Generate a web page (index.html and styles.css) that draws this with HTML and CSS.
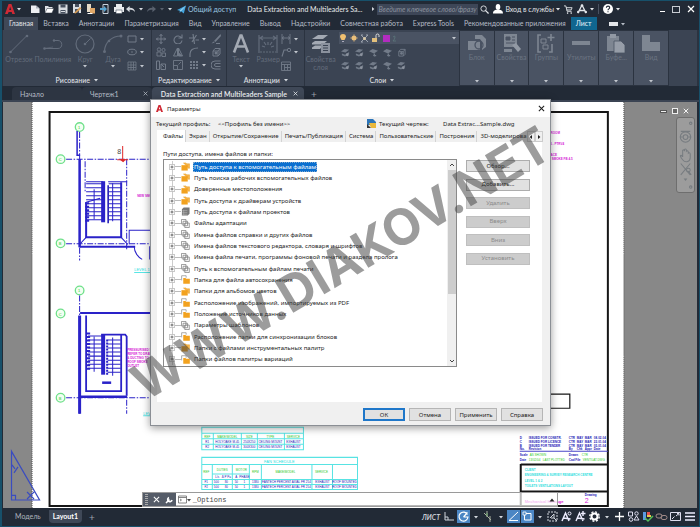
FILE: index.html
```html
<!DOCTYPE html>
<html lang="ru">
<head>
<meta charset="utf-8">
<title>Data Extraction and Multileaders Sample</title>
<link rel="stylesheet" href="styles.css">
</head>
<body>
<svg class="defs" aria-hidden="true">
  <symbol id="i-caret" viewBox="0 0 4 4"><path d="M0 1h4L2 3.4z" fill="currentColor"/></symbol>
  <symbol id="i-logo" viewBox="0 0 10 10"><path d="M0 10 3.6 0h2.8L10 10H7.3L6.7 8H3.6L2.8 10zM4.2 6h2L5.1 2.4z" fill="#cf2a35"/></symbol>
  <symbol id="i-x" viewBox="0 0 8 8"><path d="M1 1l6 6M7 1L1 7" stroke="currentColor" stroke-width="1.2" fill="none"/></symbol>
  <symbol id="i-new" viewBox="0 0 10 10"><path d="M1 1.5h5l3.5 3V9H1z" fill="#eceef1"/><path d="M6 1.5v3h3.5" fill="#aeb4bd"/></symbol>
  <symbol id="i-open" viewBox="0 0 10 10"><path d="M1 9V2h3l1 1h3.5v1.5" fill="#dfe2e6"/><path d="M1 9l2-4.5h7L8 9z" fill="#fff" stroke="#222a36" stroke-width=".5"/></symbol>
  <symbol id="i-save" viewBox="0 0 10 10"><path d="M.5.5h9v9h-9z" fill="#d8dce1"/><path d="M2.5.5h5v3h-5zM2.5 6h5v3.5h-5z" fill="#47505f"/><path d="M3 7.5h4" stroke="#d8dce1"/></symbol>
  <symbol id="i-saveas" viewBox="0 0 10 10"><path d="M1 0h8v9H1z" fill="#d8dce1"/><path d="M3 0h4v3H3zM3 5h4v4H3z" fill="#47505f"/><path d="M2 9l6-6 1.5 1.5-6 5z" fill="#d59a52"/></symbol>
  <symbol id="i-web" viewBox="0 0 10 10"><path d="M1 0h4v8H1z" fill="#e5d9c5"/><path d="M4 4h5v5.5H4z" fill="#e0a868"/><path d="M1.5 9.5h5" stroke="#fff"/></symbol>
  <symbol id="i-cloud" viewBox="0 0 10 10"><path d="M3 .5h5v9H3z" fill="none" stroke="#c9d2dc"/><path d="M0 4h4V2l3 3-3 3V6H0z" fill="#58a5d2"/></symbol>
  <symbol id="i-print" viewBox="0 0 10 10"><path d="M2 0h6v3H2zM0 3h10v5H0z" fill="#e9ebee"/><path d="M2 6h6v3.5H2z" fill="#fff" stroke="#47505f" stroke-width=".6"/></symbol>
  <symbol id="i-undo" viewBox="0 0 10 8"><path d="M4 0v2c4 0 6 2 6 5-1-2-3-3-6-2.600V7L0 3.500z" fill="currentColor"/></symbol>
  <symbol id="i-plane" viewBox="0 0 10 9"><path d="M0 5L10 0 7.500 9 4.500 6.500 3 8.500V6z" fill="#45a6df"/><path d="M3 6l7-6-5.500 6.500" fill="#a8d9f3"/></symbol>
  <symbol id="i-search" viewBox="0 0 10 10"><circle cx="4" cy="4" r="3" fill="none" stroke="currentColor"/><path d="M6 6l3.500 3.500" stroke="currentColor" stroke-width="1.400"/></symbol>
  <symbol id="i-user" viewBox="0 0 10 10"><ellipse cx="5" cy="3" rx="2.300" ry="2.900" fill="#fff"/><path d="M0 9.500c0-3 2-3.300 3.500-3.700h3C8 6.200 10 6.500 10 9.500z" fill="#fff"/></symbol>
  <symbol id="i-cart" viewBox="0 0 10 10"><path d="M0 1h2l1.500 6h5M2.300 3H9L8 5.500H3" fill="none" stroke="currentColor"/><circle cx="4" cy="9" r=".9" fill="currentColor"/><circle cx="8" cy="9" r=".9" fill="currentColor"/></symbol>
  <symbol id="i-app" viewBox="0 0 10 10"><path d="M5 1L1 9M5 1l4 8M2 6.500h6" fill="none" stroke="currentColor" stroke-width="1.300"/><circle cx="5" cy="1.500" r="1.300" fill="currentColor"/><circle cx="1.200" cy="8" r="1.200" fill="currentColor"/><circle cx="8.800" cy="8" r="1.200" fill="currentColor"/></symbol>
  <symbol id="i-help" viewBox="0 0 10 10"><circle cx="5" cy="5" r="5" fill="#fff"/><path d="M3.400 3.800C3.400 1.500 6.700 1.700 6.700 3.700 6.700 5 5 4.800 5 6.300M5 7.200v1" fill="none" stroke="#222a36" stroke-width="1.100"/></symbol>
  <symbol id="i-line" viewBox="0 0 20 20"><path d="M1 18.500L18 1.500" stroke="currentColor"/><circle cx="1.500" cy="18" r="1.300" fill="currentColor"/><circle cx="18" cy="2" r="1.300" fill="currentColor"/></symbol>
  <symbol id="i-poly" viewBox="0 0 20 20"><path d="M1 14.500h14c5 0 5-8 0-8H11" fill="none" stroke="currentColor"/><path d="M1 14.500l9-1.500" stroke="currentColor" stroke-width=".6"/><circle cx="1.500" cy="14.500" r="1.300" fill="currentColor"/><circle cx="11" cy="6.500" r="1.200" fill="currentColor"/></symbol>
  <symbol id="i-circle" viewBox="0 0 20 20"><circle cx="10" cy="10" r="9" fill="none" stroke="currentColor" stroke-width="1.200"/><path d="M10 10l5.500-5.500" stroke="currentColor"/><circle cx="10" cy="10" r="1.300" fill="currentColor"/></symbol>
  <symbol id="i-arc" viewBox="0 0 20 20"><path d="M1.500 17C2 8 9 2 18 2" fill="none" stroke="currentColor" stroke-width="1.200"/><circle cx="1.500" cy="17.500" r="1.500" fill="currentColor"/><circle cx="6" cy="7" r="1.300" fill="currentColor"/><circle cx="18" cy="2" r="1.500" fill="currentColor"/></symbol>
  <symbol id="i-rect" viewBox="0 0 10 10"><path d="M1 2h8v6H1z" fill="none" stroke="currentColor"/></symbol>
  <symbol id="i-ellipse" viewBox="0 0 10 10"><ellipse cx="5" cy="5" rx="4.300" ry="2.800" fill="none" stroke="currentColor"/><circle cx="5" cy="5" r=".8" fill="currentColor"/></symbol>
  <symbol id="i-hatch" viewBox="0 0 10 10"><path d="M1 1h8v8H1zM1 4h8M1 6.500h8M4 1v8M6.500 1v8" fill="none" stroke="currentColor" stroke-width=".8"/></symbol>
  <symbol id="i-move" viewBox="0 0 10 10"><path d="M5 0v10M0 5h10M3.500 2L5 .5 6.500 2M3.500 8L5 9.500 6.500 8M2 3.500L.5 5 2 6.500M8 3.500L9.500 5 8 6.500" fill="none" stroke="currentColor"/></symbol>
  <symbol id="i-rotate" viewBox="0 0 10 10"><path d="M8.500 4A4 4 0 1 0 9 6.500M9 .5V4H5.500" fill="none" stroke="currentColor" stroke-width="1.100"/></symbol>
  <symbol id="i-trim" viewBox="0 0 10 10"><path d="M4 0l1.500 10M7.500 1L3 8M0 4h4M6.500 6H10" fill="none" stroke="currentColor" stroke-width="1.200"/></symbol>
  <symbol id="i-erase" viewBox="0 0 10 10"><path d="M9.500 0L3 7l1.500 1L10 2zM.5 9.500L2.500 7.500l1.300 1z" fill="currentColor"/><path d="M5 9.500h4" stroke="currentColor"/></symbol>
  <symbol id="i-copy" viewBox="0 0 10 10"><g fill="none" stroke="currentColor" stroke-width=".9"><circle cx="3" cy="2.500" r="1.700"/><circle cx="7.500" cy="3" r="1.600"/><path d="M1 5h4v4H1zM6 6h3.500v3.500H6z"/></g></symbol>
  <symbol id="i-mirror" viewBox="0 0 10 10"><path d="M4.500 1v8H.5zM5.500 1v8h4z" fill="none" stroke="currentColor"/><path d="M5.500 5v4h4z" fill="currentColor"/></symbol>
  <symbol id="i-fillet" viewBox="0 0 10 10"><path d="M1 10V7c0-4 3-6 8-6" fill="none" stroke="currentColor" stroke-width="1.200"/></symbol>
  <symbol id="i-explode" viewBox="0 0 10 10"><path d="M2 4h5v5H2zM2 4l2-2.500h5V7L7 9M7 4l2-2.500" fill="none" stroke="currentColor"/><circle cx="5" cy="6" r="1.500" fill="currentColor"/></symbol>
  <symbol id="i-stretch" viewBox="0 0 10 10"><path d="M.5 1h3v8.500h-3zM5 4h4.500v5.500H5zM5 4L8 7" fill="none" stroke="currentColor"/></symbol>
  <symbol id="i-scale" viewBox="0 0 10 10"><path d="M.5.500h9v9h-9zM.5 5.500h4v4M5.500 4.500l2.500-2.500" fill="none" stroke="currentColor" stroke-width=".9"/></symbol>
  <symbol id="i-array" viewBox="0 0 10 10"><path d="M1 1h2v2H1zM4 1h2v2H4zM7 1h2v2H7zM1 4h2v2H1zM4 4h2v2H4zM7 4h2v2H7zM1 7h2v2H1zM4 7h2v2H4zM7 7h2v2H7z" fill="currentColor"/></symbol>
  <symbol id="i-offset" viewBox="0 0 10 10"><path d="M9.500 1H4a4 4 0 0 0 0 8h5.500M9.500 3.500H5a1.500 1.500 0 0 0 0 3h4.500" fill="none" stroke="currentColor"/></symbol>
  <symbol id="i-text" viewBox="0 0 20 20"><path d="M3 18.500L9.500 1.500h1L17 18.500M5.500 12.500h9" fill="none" stroke="currentColor" stroke-width="2.600"/></symbol>
  <symbol id="i-dim" viewBox="0 0 20 20"><path d="M1 1v18M19 1v18M1 4h18M5 2L2 4l3 2M15 2l3 2-3 2M4 12l3 1M16 12l-3 1M10 8v3M6 8l2 3M14 8l-2 3" fill="none" stroke="currentColor" stroke-width="1.200"/><path d="M2 18h16" stroke="currentColor" stroke-dasharray="2 1"/></symbol>
  <symbol id="i-dimlin" viewBox="0 0 10 10"><path d="M1 0v10M9 0v10M1 4h8M3 2.500L1 4l2 1.500M7 2.500L9 4 7 5.500" fill="none" stroke="currentColor" stroke-width=".9"/></symbol>
  <symbol id="i-leader" viewBox="0 0 10 10"><path d="M1 9.500L3 3h3" fill="none" stroke="currentColor" stroke-width="1.100"/><circle cx="8" cy="3" r="1.700" fill="none" stroke="currentColor"/></symbol>
  <symbol id="i-table" viewBox="0 0 10 10"><path d="M.5 1h9v8.500h-9zM.5 3.500h9M3.500 3.500v6M6.500 3.500v6M3.500 6.500h6" fill="none" stroke="currentColor" stroke-width=".9"/></symbol>
  <symbol id="i-layers" viewBox="0 0 20 20"><path d="M1 5l6-4h10l-5 4zM1 9l3-2h12l-4 3.500H1zM1 13.500l3-2h8l-3 3.500H1z" fill="currentColor"/><path d="M10 9h9v10h-9z" fill="#8b929e"/><path d="M12 11.500h5M12 14h5M12 16.500h5" stroke="#3b4453"/></symbol>
  <symbol id="i-layer" viewBox="0 0 10 10"><path d="M0 4l4-3 5 1-4 3zM1 6l3.500 1.500L9 4.500v2L4.500 9.500 1 8z" fill="currentColor"/><circle cx="7" cy="7.500" r="1.600" fill="#8b929e"/></symbol>
  <symbol id="i-layer2" viewBox="0 0 10 10"><path d="M0 3.500L4 1l6 2-4.500 3z" fill="currentColor"/><path d="M6 6v3.500M4.500 8L8 8.500" stroke="currentColor" stroke-width="1.200"/></symbol>
  <symbol id="i-block" viewBox="0 0 20 20"><path d="M1 8h12v9H1zM8 2h7l4 4v8l-4 3V9L13 6H8z" fill="currentColor"/><circle cx="12" cy="12" r="4" fill="none" stroke="#4a5363" stroke-width="1.300"/></symbol>
  <symbol id="i-props" viewBox="0 0 20 20"><path d="M2 1h13v13H2z" fill="currentColor"/><path d="M4 4h4v3H4zM10 4h3M10 7h3M4 10h9" fill="#4a5363" stroke="#4a5363"/><path d="M10 12l4-2 5 6-3 3z" fill="#9299a4"/><path d="M2 16h8v3H2z" fill="currentColor"/></symbol>
  <symbol id="i-group" viewBox="0 0 20 20"><path d="M5 2H2v17h3M13 19h3v-8M15 1v7M11.500 4.500h7" fill="none" stroke="currentColor" stroke-width="1.600"/><path d="M5 6h5v4H5zM7 12h5v4H7z" fill="none" stroke="currentColor"/></symbol>
  <symbol id="i-util" viewBox="0 0 20 20"><path d="M1 8h18v4H1z" fill="currentColor"/></symbol>
  <symbol id="i-clip" viewBox="0 0 20 20"><path d="M1 3h12v15H1z" fill="currentColor"/><path d="M4 1h6v4H4z" fill="#9299a4"/><path d="M8 8h7l4 4v8H8z" fill="#969da8" stroke="#4a5363" stroke-width=".8"/></symbol>
  <symbol id="i-view" viewBox="0 0 20 20"><path d="M1 2h8v7h10v9H1z" fill="currentColor"/></symbol>
  <symbol id="i-folder" viewBox="0 0 10 10"><path d="M2.500 1h3l.8 1H9.500v5H8" fill="#f7b44a" stroke="#e09a22" stroke-width=".5"/><path d="M.5 3.500h7v6h-7z" fill="#f2a21f"/></symbol>
  <symbol id="i-folder2" viewBox="0 0 10 10"><path d="M.7 6V.8h5V3" fill="none" stroke="#8b8b8b" stroke-width=".8"/><path d="M2.500 3.200h2.500l.7 1H9.800v5.600H2.500z" fill="#f2a21f"/></symbol>
  <symbol id="i-docs" viewBox="0 0 10 10"><path d="M.5.500h5v5h-5zM2.300 2.500h5v5h-5zM4.200 4.500h5v5h-5z" fill="#fff" stroke="#777" stroke-width=".8"/></symbol>
  <symbol id="i-proj" viewBox="0 0 10 10"><path d="M1 2.500L3 .5h6.500v7L7.500 9.500H1z" fill="#777"/><path d="M1.500 4h5.500M1.500 6h5.500M1.500 8h5.500M3 3v6" stroke="#bbb" stroke-width=".6"/></symbol>
  <symbol id="i-plus" viewBox="0 0 8 8"><path d="M.5.500h7v7h-7z" fill="#fff" stroke="#9a9a9a" stroke-width=".8"/><path d="M2 4h4M4 2v4" stroke="#333" stroke-width=".9"/></symbol>
</svg>

<div class="app">
  <header class="titlebar">
    <button class="ic" aria-label="Меню"><svg class="s10"><use href="#i-logo"/></svg></button>
    <svg class="s4"><use href="#i-caret"/></svg>
    <div class="quick">
      <button class="ic" aria-label="Создать"><svg class="s10"><use href="#i-new"/></svg></button>
      <button class="ic" aria-label="Открыть"><svg class="s10"><use href="#i-open"/></svg></button>
      <button class="ic" aria-label="Сохранить"><svg class="s10"><use href="#i-save"/></svg></button>
      <button class="ic" aria-label="Сохранить как"><svg class="s10"><use href="#i-saveas"/></svg></button>
      <button class="ic" aria-label="Из веба"><svg class="s10"><use href="#i-web"/></svg></button>
      <button class="ic" aria-label="В веб"><svg class="s10"><use href="#i-cloud"/></svg></button>
      <button class="ic" aria-label="Печать"><svg class="s10"><use href="#i-print"/></svg></button>
    </div>
    <div class="history">
      <button class="ic" aria-label="Отменить"><svg class="s9"><use href="#i-undo"/></svg></button>
      <svg class="s4"><use href="#i-caret"/></svg>
      <button class="ic dim flip" aria-label="Повторить"><svg class="s9"><use href="#i-undo"/></svg></button>
      <svg class="s4 dim"><use href="#i-caret"/></svg>
      <svg class="s4"><use href="#i-caret"/></svg>
    </div>
    <a class="share" href="#"><svg class="s9"><use href="#i-plane"/></svg>Общий доступ</a>
    <div class="doc">Data Extraction and Multileaders Sa...</div>
    <svg class="s4 right"><use href="#i-caret"/></svg>
    <input class="search" type="text" aria-label="Поиск" placeholder="Введите ключевое слово/фразу">
    <div class="account">
      <button class="ic" aria-label="Найти"><svg class="s9"><use href="#i-search"/></svg></button>
      <button class="login"><svg class="s10"><use href="#i-user"/></svg>Вход в службы<svg class="s4"><use href="#i-caret"/></svg></button>
      <button class="ic" aria-label="Магазин"><svg class="s9"><use href="#i-cart"/></svg></button>
      <button class="ic apps" aria-label="Приложения"><svg class="s10"><use href="#i-app"/></svg><svg class="s4"><use href="#i-caret"/></svg></button>
      <button class="ic help" aria-label="Справка"><svg class="s10"><use href="#i-help"/></svg><svg class="s4"><use href="#i-caret"/></svg></button>
    </div>
    <div class="winbtns">
      <button class="ic" aria-label="Свернуть"><i class="min"></i></button>
      <button class="ic" aria-label="Развернуть"><i class="max"></i></button>
      <button class="ic" aria-label="Закрыть"><svg class="s8"><use href="#i-x"/></svg></button>
    </div>
  </header>

  <nav class="menu">
    <a class="on" href="#">Главная</a><a href="#">Вставка</a><a href="#">Аннотации</a><a href="#">Параметризация</a><a href="#">Вид</a><a href="#">Управление</a><a href="#">Вывод</a><a href="#">Надстройки</a><a href="#">Совместная работа</a><a href="#">Express Tools</a><a href="#">Рекомендованные приложения</a><a class="sheet" href="#">Лист</a>
    <button class="ic" aria-label="Вид ленты"><i class="pill"></i><svg class="s4"><use href="#i-caret"/></svg></button>
  </nav>

  <section class="ribbon">
    <div class="panel">
      <div class="tools draw">
        <button class="big"><svg class="s20"><use href="#i-line"/></svg>Отрезок</button>
        <button class="big"><svg class="s20"><use href="#i-poly"/></svg>Полилиния</button>
        <button class="big"><svg class="s20"><use href="#i-circle"/></svg>Круг<svg class="s4 lit"><use href="#i-caret"/></svg></button>
        <button class="big"><svg class="s20"><use href="#i-arc"/></svg>Дуга<svg class="s4 lit"><use href="#i-caret"/></svg></button>
        <div class="mini two">
          <svg class="s10"><use href="#i-rect"/></svg><svg class="s4 lit"><use href="#i-caret"/></svg>
          <svg class="s10"><use href="#i-ellipse"/></svg><svg class="s4 lit"><use href="#i-caret"/></svg>
          <svg class="s10"><use href="#i-hatch"/></svg><svg class="s4 lit"><use href="#i-caret"/></svg>
        </div>
      </div>
      <button class="plabel">Рисование<svg class="s4"><use href="#i-caret"/></svg></button>
    </div>
    <div class="panel">
      <div class="mini five">
        <svg class="s10"><use href="#i-move"/></svg><svg class="s10"><use href="#i-rotate"/></svg><svg class="s10"><use href="#i-trim"/></svg><svg class="s4 lit"><use href="#i-caret"/></svg><svg class="s10"><use href="#i-erase"/></svg>
        <svg class="s10"><use href="#i-copy"/></svg><svg class="s10"><use href="#i-mirror"/></svg><svg class="s10"><use href="#i-fillet"/></svg><svg class="s4 lit"><use href="#i-caret"/></svg><svg class="s10"><use href="#i-explode"/></svg>
        <svg class="s10"><use href="#i-stretch"/></svg><svg class="s10"><use href="#i-scale"/></svg><svg class="s10"><use href="#i-array"/></svg><svg class="s4 lit"><use href="#i-caret"/></svg><svg class="s10"><use href="#i-offset"/></svg>
      </div>
      <button class="plabel">Редактирование<svg class="s4"><use href="#i-caret"/></svg></button>
    </div>
    <div class="panel">
      <div class="tools annot">
        <button class="big bright"><svg class="s20"><use href="#i-text"/></svg>Текст<svg class="s4 lit"><use href="#i-caret"/></svg></button>
        <button class="big"><svg class="s20"><use href="#i-dim"/></svg>Размер</button>
        <div class="mini two">
          <svg class="s10"><use href="#i-dimlin"/></svg><svg class="s4 lit"><use href="#i-caret"/></svg>
          <svg class="s10"><use href="#i-leader"/></svg><svg class="s4 lit"><use href="#i-caret"/></svg>
          <svg class="s10"><use href="#i-table"/></svg>
        </div>
      </div>
      <button class="plabel">Аннотации<svg class="s4"><use href="#i-caret"/></svg></button>
    </div>
    <div class="panel">
      <div class="tools layers">
        <button class="big bright"><svg class="s20"><use href="#i-layers"/></svg>Свойства<br>слоя</button>
        <div class="layerbox">
          <button class="layersel" aria-label="Слой">
            <svg class="bulbs" viewBox="0 0 66 10">
              <path d="M1 4a3 3 0 1 1 6 0L5.500 7h-3z" fill="#f0c070"/><path d="M3 8.500h2" stroke="#aab"/>
              <circle cx="15" cy="5" r="2.500" fill="#e9bf7b"/><path d="M15 1v8M11 5h8" stroke="#e9bf7b" stroke-width=".5"/>
              <path d="M22 2l7 7M29 2l-7 7M22 2h2M27 2h2M22 9h2" stroke="#9aa2ae"/><circle cx="25.500" cy="5.500" r="1.500" fill="#d9c9a5"/>
              <path d="M33 5h5v4h-5z" fill="#e3c07c"/><path d="M37 5V2.500a1.500 1.500 0 0 1 3 0V4" fill="none" stroke="#ddd"/>
              <path d="M44 2h7v7h-7z" fill="#b32cc0"/><path d="M54 4q2-2 2 0t-2 4h3" fill="none" stroke="#5f7c80" stroke-width=".7"/>
            </svg>
            <svg class="s4 lit"><use href="#i-caret"/></svg>
          </button>
          <div class="mini lay">
            <svg class="s9"><use href="#i-layer"/></svg><svg class="s9"><use href="#i-layer"/></svg><svg class="s9"><use href="#i-layer2"/></svg><svg class="s9"><use href="#i-layer2"/></svg><svg class="s9"><use href="#i-explode"/></svg>
            <svg class="s9"><use href="#i-layer"/></svg><svg class="s9"><use href="#i-layer"/></svg><svg class="s9"><use href="#i-layer"/></svg><svg class="s9"><use href="#i-layer2"/></svg><svg class="s9"><use href="#i-layer"/></svg>
          </div>
        </div>
      </div>
      <button class="plabel">Слои<svg class="s4"><use href="#i-caret"/></svg></button>
    </div>
    <button class="fold"><svg class="s20"><use href="#i-block"/></svg>Блок<svg class="s4"><use href="#i-caret"/></svg></button>
    <button class="fold"><svg class="s20"><use href="#i-props"/></svg>Свойства<svg class="s4"><use href="#i-caret"/></svg></button>
    <button class="fold"><svg class="s20"><use href="#i-group"/></svg>Группы<svg class="s4"><use href="#i-caret"/></svg></button>
    <button class="fold"><svg class="s20"><use href="#i-util"/></svg>Утилиты<svg class="s4"><use href="#i-caret"/></svg></button>
    <button class="fold"><svg class="s20"><use href="#i-clip"/></svg>Буфе...<svg class="s4"><use href="#i-caret"/></svg></button>
    <button class="fold"><svg class="s20"><use href="#i-view"/></svg>Вид<svg class="s4"><use href="#i-caret"/></svg></button>
    <div class="panel"></div>
  </section>

  <div class="files">
    <a class="ftab start" href="#">Начало</a>
    <a class="ftab" href="#">Чертеж1<svg class="s5"><use href="#i-x"/></svg></a>
    <a class="ftab on" href="#">Data Extraction and Multileaders Sample<svg class="s5"><use href="#i-x"/></svg></a>
    <button class="add" aria-label="Новая вкладка">+</button>
  </div>

  <main class="work">
    <svg class="drawing" viewBox="3 103 693 405" preserveAspectRatio="none">
      <path d="M32 103h591v405H32z" fill="#fff"/>
      <path d="M32 103v405M623 103v405" stroke="#555" stroke-dasharray="1 1"/>
      <path d="M49.500 113h557.500v393H49.500z" fill="none" stroke="#161616" stroke-width="2"/>
      <g fill="#f2fff2" stroke="#6fe08a" stroke-width="1.300">
        <circle cx="79.500" cy="128" r="4.300"/><circle cx="60.500" cy="160" r="4.300"/><circle cx="60.500" cy="244" r="4.300"/>
        <circle cx="79.500" cy="291" r="4.300"/><circle cx="60.500" cy="314" r="4.300"/><circle cx="60.500" cy="398" r="4.300"/>
      </g>
      <g class="t4 green mid"><text x="79" y="130">1</text><text x="60" y="162">C</text><text x="60" y="246">B</text><text x="79" y="293">1</text><text x="60" y="316">C</text><text x="60" y="400">B</text></g>
      <g fill="none" stroke="#2a22c8">
        <g stroke-dasharray="6 1.500 1.500 1.500"><path d="M79.500 133v128M66 160h84M66 244.500h84M126.500 160v90M85 162v30"/><path d="M79.500 296v118M66 398h84M126.500 400v14"/></g>
        <path d="M77 132v24h3" stroke-width="1.500"/>
        <path d="M79.500 160v88" stroke-width="2.500"/>
        <path d="M86 203v35h35V183" stroke-width="2"/>
        <path d="M79.500 247.500H135" stroke-width="2"/>
        <path d="M79.500 245L86 238M121 238l6.500 7M86 182.500h17M108 182.500h19" />
        <path d="M103 182v41" stroke-width="4"/><path d="M108 186v38" stroke-width="1.500" stroke="#160fb0"/>
        <path d="M94 184v38" stroke-width="16" stroke-dasharray="1 3"/><path d="M87 203v20" stroke-width="4" stroke-dasharray="2 1.500"/>
        <path d="M115 184v38" stroke-width="13" stroke-dasharray="1 3"/><path d="M112.500 184v38M94 190v30M86 203l14-4"/>
        <path d="M134 247c0 6 4 11 8 13M129 245v-14h21M149.500 247v13"/>
        <path d="M79.500 316v98" stroke-width="3"/><path d="M80 313.500h70" stroke-width="2"/>
        <path d="M86 316v75.500h35V335" stroke-width="1.800"/>
        <path d="M101 335h24l1.500 2v59" stroke-width="1.800"/><path d="M80 397h47" stroke-width="2.500"/>
        <path d="M95 336v36" stroke-width="14" stroke-dasharray="1 3"/><path d="M88 333v38" stroke-width="4" stroke-dasharray="2 1.500"/>
        <path d="M103 335v40" stroke-width="4"/><path d="M114 340v36" stroke-width="13" stroke-dasharray="1 3"/><path d="M107 340v36" stroke-width="2" stroke-dasharray="2 1"/><path d="M112.500 338v38M94 337v35"/>
        <path d="M102 383h9" stroke-width="2.500"/>
      </g>
      <path d="M122.500 147v14M117 160.500h11" stroke="#e02a2a" fill="none"/><path d="M119 160h7l-3 3z" fill="#e02a2a"/>
      <text class="t7" x="117" y="155">8</text>
      <g class="t3 mag strong">
        <text x="137" y="198">NEW SMOKE</text>
        <text x="127" y="351">PRESSURISED STAIR</text><text x="127" y="355">REFER TO DRAW</text><text x="127" y="359">&amp; DUCTING TO</text><text x="127" y="363">ROOF SMOKE</text><text x="127" y="367">OUTLET</text>
        <text x="546" y="135">IN ROOM</text><text x="546" y="146">104 - PTRV4</text><text x="546" y="157">PLACE</text><text x="546" y="161">BY SMOKE FB 4.5</text>
      </g>
      <g class="t4 cyan"><text x="134" y="272">LEVEL 1</text><text x="143" y="415">LEVEL 2</text></g>
      <path d="M134 273h16M143 416h8" stroke="#58e6e6"/>
      <g fill="none" stroke="#58e3e3">
        <path d="M201.500 427.500h101.500v22.500H201.500zM201.500 433.500H303M201.500 439H303M201.500 444.500H303M213 433.500V450M241 433.500V450M257 433.500V450M284 433.500V450"/>
        <path d="M201.500 457.500H357v32H201.500zM201.500 464.500H357M201.500 479.500H357M201.500 484.500H357M212.500 474h36.500M212 464.500v25M232 464.500v25M249 464.500v25M261 464.500v25M311.500 464.500v25M332 464.500v25"/>
      </g>
      <g class="t3 green mid"><text x="207" y="438">REF</text><text x="227" y="438">MAKE/MODEL</text><text x="249" y="438">SIZE</text><text x="270" y="438">TYPE</text><text x="293" y="438">SERVICE</text>
        <text x="206" y="473">REF</text><text x="222" y="471">DUTIES</text><text x="241" y="471">MOTOR</text><text x="255" y="473">RPM</text><text x="285" y="473">MAKE/MODEL</text><text x="321" y="473">SERVICE</text></g>
      <text class="t4 cyan mid" x="279" y="463">FAN SCHEDULE</text>
      <g class="t3 blue mid">
        <text x="207" y="443">R1</text><text x="227" y="443">HOLYOAKE M-45</text><text x="249" y="443">250X250</text><text x="270" y="443">CEILING MOUNT</text><text x="293" y="443">EXHAUST</text>
        <text x="207" y="448">R2</text><text x="227" y="448">HOLYOAKE M-45</text><text x="249" y="448">300X300</text><text x="270" y="448">CEILING MOUNT</text><text x="293" y="448">EXHAUST</text>
        <text x="217" y="478">L/s</text><text x="226" y="478">Δ P Pa</text><text x="236" y="478">A</text><text x="244" y="478">PHASE</text>
        <text x="206" y="483">F1</text><text x="216" y="483">500</text><text x="226" y="483">80</text><text x="236" y="483">50</text><text x="244" y="483">1</text><text x="255" y="483">1380</text><text x="286" y="483">FANTECH PERCENT AXIAL FR 254</text><text x="322" y="483">EXHAUST</text><text x="344" y="483">ROOF MOUNTED</text>
        <text x="206" y="488">F2</text><text x="216" y="488">500</text><text x="226" y="488">80</text><text x="236" y="488">50</text><text x="244" y="488">1</text><text x="255" y="488">1380</text><text x="286" y="488">FANTECH PERCENT AXIAL FR 254</text><text x="322" y="488">EXHAUST</text><text x="344" y="488">ROOF MOUNTED</text>
      </g>
      <path d="M540 394.500h29v14h-29z" fill="none" stroke="#161616" stroke-width="1.200"/>
      <g class="t3 blue strong">
        <text x="519" y="439">D</text><text x="528" y="439">ISSUED FOR CONSTR.</text><text x="568" y="439">CTR</text><text x="576" y="439">MAY</text><text x="584" y="439">MAR</text><text x="593" y="439">08-02-04</text>
        <text x="519" y="443">C</text><text x="528" y="443">ISSUED FOR LICENCE</text><text x="568" y="443">CTR</text><text x="576" y="443">MAY</text><text x="584" y="443">MAR</text><text x="593" y="443">22-01-04</text>
        <text x="519" y="447">B</text><text x="528" y="447">ISSUED FOR TENDER</text><text x="568" y="447">CTR</text><text x="576" y="447">MAY</text><text x="584" y="447">MAR</text><text x="593" y="447">05-01-04</text>
        <text x="519" y="450">No.</text><text x="528" y="450">Revision</text><text x="568" y="450">By</text><text x="576" y="450">Chk</text><text x="584" y="450">Appr</text><text x="593" y="450">Date</text>
        <text x="519" y="456">Scale</text><text x="519" y="461">Date</text><text x="568" y="456">Drawn</text><text x="568" y="461">Cad File</text><text x="584" y="496">Drawing</text>
      </g>
      <path d="M519 451.500h88" stroke="#4844c8"/>
      <g class="t3 green"><text x="529" y="456">AS SHOWN</text><text x="528" y="461">13/02/04</text><text x="542" y="461">LAST PLOTTED</text><text x="581" y="456">CTR</text><text x="582" y="461">VENTILAT.DWG</text></g>
      <path d="M520 464.500h87M520 491.500h87M520 464v42" fill="none" stroke="#161616" stroke-width="2"/>
      <g class="t3 cyan strong"><text x="524" y="471">CLIENT</text><text x="524" y="476">ENGINEERING &amp; SURVEY RESEARCH CENTRE</text><text x="524" y="482">LEVEL 1 &amp; 2</text><text x="524" y="487">TOILETS VENTILATIONS LAYOUT</text></g>
      <text class="t4 mag strong" x="524" y="503">Mechanical Heritage</text><text class="t7 mag" x="584" y="503">2</text>
      <g fill="none" stroke="#3a4cc0" stroke-width="1.200"><path d="M11.500 451.500V500h28zM11.500 495.500h4V500M27 492l7 7M34 492l-7 7M14 473l4-6M12 465l3 4"/></g>
    </svg>
    <div class="docbtns"><i class="dmin"></i><i class="dmax"></i><svg class="s6"><use href="#i-x"/></svg></div>
    <div class="navbar">
      <svg viewBox="0 0 18 74"><g fill="none" stroke="#777c80" stroke-width="1.100"><circle cx="14.500" cy="3.500" r="1.300"/><circle cx="9" cy="18" r="5.500"/><circle cx="9" cy="18" r="2.500"/><path d="M4 12h10M3 18h3M12 18h3"/><path d="M6 42c-5-6-1-5 0-3v-7c1-1 2 0 2 1v-2c1-1 2 0 2 1v1c1-1 2 0 2 1v1c1-1 2 0 2 1v4c0 4-5 6-8 2z"/><path d="M4 46l10 12M14 46L4 58M12 54l3 4"/><circle cx="12" cy="53" r="2"/><circle cx="14.500" cy="71" r="1.300"/></g><path d="M7 62h4l-2 2.500z" fill="#777c80"/></svg>
    </div>
    <div class="cmd">
      <div class="cmdgrip"><i class="dots"></i><svg class="s7"><use href="#i-x"/></svg><svg class="s8" viewBox="0 0 8 8"><path d="M1 7l3.500-3.500M4 1.500a2.200 2.200 0 1 0 3 2.500" fill="none" stroke="currentColor" stroke-width="1.600"/></svg></div>
      <svg class="s9" viewBox="0 0 9 9"><path d="M.5 1h8v7h-8zM.5 2.500h8M2 4l1.500 1L2 6" fill="none" stroke="#666" stroke-width=".8"/></svg><svg class="s4"><use href="#i-caret"/></svg>
      <label for="cmdline">_</label><input id="cmdline" type="text" value="Options">
      <svg class="s6" viewBox="0 0 6 6"><path d="M.5 4.500h5L3 1.500z" fill="#222"/></svg>
    </div>
  </main>

  <footer class="status">
    <a class="ltab" href="#">Модель</a><a class="ltab on" href="#">Layout1</a><button class="add" aria-label="Новый лист">+</button>
    <div class="sbtns">
      <span class="mode">ЛИСТ</span>
      <svg class="s13" viewBox="0 0 13 13"><path d="M2 2v8h9M2 7h3v3" fill="none" stroke="#cfd4db"/></svg>
      <svg class="s13 act" viewBox="0 0 13 13"><path d="M10.500 4.500A4.500 4.500 0 1 0 11 7H6.500M6.500 7l4-4.500" fill="none" stroke="#fff" stroke-width="1.200"/></svg>
      <svg class="s4"><use href="#i-caret"/></svg>
      <svg class="s13" viewBox="0 0 13 13"><path d="M2 3l7 7M5 1v6M8 6v6" fill="none" stroke="#a9b0a0"/><path d="M5 3v3" stroke="#72b070"/></svg>
      <svg class="s4"><use href="#i-caret"/></svg>
      <svg class="s13 act" viewBox="0 0 13 13"><path d="M11 2L2 10.500h9" fill="none" stroke="#fff"/></svg>
      <svg class="s13 act" viewBox="0 0 13 13"><path d="M3.500 3.500H10V10H3.500z" fill="none" stroke="#fff"/><path d="M2 2h3v3H2z" fill="#4b86c4" stroke="#fff" stroke-width=".8"/></svg>
      <svg class="s4"><use href="#i-caret"/></svg>
      <svg class="s13" viewBox="0 0 13 13"><path d="M2 2h9v9H2z" fill="none" stroke="#cfd4db" stroke-dasharray="2 1"/><path d="M4 8l4-4v4H5M8 8l3 3" fill="none" stroke="#cfd4db"/></svg>
      <svg class="s13" viewBox="0 0 13 13"><path d="M2 11l3.500-8L9 11M3.500 8l7 1" fill="none" stroke="#eef" stroke-width="1.500"/><circle cx="9.500" cy="3.500" r="1.500" fill="none" stroke="#eef"/></svg>
      <svg class="s13" viewBox="0 0 13 13"><path d="M2 11l3.500-8L9 11M3.500 8l7 1M9 1v5M7 3.500h4.500" fill="none" stroke="#eef" stroke-width="1.400"/></svg>
      <svg class="s13" viewBox="0 0 13 13"><circle cx="6.500" cy="6.500" r="3" fill="none" stroke="#fff" stroke-width="2"/><circle cx="6.500" cy="6.500" r="4.700" fill="none" stroke="#fff" stroke-width="1.400" stroke-dasharray="2 1.690"/></svg>
      <svg class="s4"><use href="#i-caret"/></svg>
      <svg class="s13" viewBox="0 0 13 13"><path d="M6.500 2v9M2 6.500h9" stroke="#fff" stroke-width="1.300"/></svg>
      <svg class="s13" viewBox="0 0 13 13"><path d="M1.500 2h4v4h-4zM7 10l2.500-4 2.500 4z" fill="none" stroke="#dde"/><circle cx="9.500" cy="3.500" r="1.700" fill="none" stroke="#dde"/><circle cx="4" cy="9.500" r="1.800" fill="none" stroke="#dde"/></svg>
      <svg class="s13" viewBox="0 0 13 13"><path d="M2 2h3v8H2z" fill="#5a9be0"/><path d="M6 2h3v3H6z" fill="#e05050"/><path d="M4 8l3 3 5-5" fill="none" stroke="#55c05a" stroke-width="1.500"/><path d="M6 5h4v2H6z" fill="#e8c54a"/></svg>
      <svg class="s13" viewBox="0 0 13 13"><rect x="1" y="4" width="6" height="4" rx="2" fill="none" stroke="#a08a88"/><rect x="6" y="5.500" width="6" height="4" rx="2" fill="none" stroke="#a08a88"/></svg>
      <svg class="s13" viewBox="0 0 13 13"><path d="M1.500 2.500h10v8h-10zM3 9l2.500-2.500M7 6l3-2.500M8 3.500h2v2" fill="none" stroke="#dde"/></svg>
      <svg class="s13" viewBox="0 0 13 13"><path d="M2 3h10M2 6.500h10M2 10h10" stroke="#eef" stroke-width="1.400"/></svg>
    </div>
  </footer>

  <section class="dialog" role="dialog" aria-labelledby="dlg-title">
    <header class="dhead"><svg class="s7"><use href="#i-logo"/></svg><h1 id="dlg-title">Параметры</h1><button class="ic" aria-label="Закрыть"><svg class="s7"><use href="#i-x"/></svg></button></header>
    <div class="profile">
      <span>Текущий профиль:</span><span>&lt;&lt;Профиль без имени&gt;&gt;</span>
      <svg class="s9" viewBox="0 0 9 9"><path d="M0 0h6l3 3v3H0z" fill="#2c74b8"/><path d="M2 4h7v5H4z" fill="#e9b83c"/><path d="M0 5l4 4H0z" fill="#333"/></svg>
      <span>Текущий чертеж:</span><span>Data Extrac...Sample.dwg</span>
    </div>
    <div class="dtabs">
      <button class="on">Файлы</button><button>Экран</button><button>Открытие/Сохранение</button><button>Печать/Публикация</button><button>Система</button><button>Пользовательские</button><button>Построения</button><button class="last">3D-моделирова</button>
      <button class="arr" aria-label="Назад"><svg class="s4 left"><use href="#i-caret"/></svg></button><button class="arr" aria-label="Вперед"><svg class="s4 right"><use href="#i-caret"/></svg></button>
    </div>
    <div class="page">
      <p class="cap">Пути доступа, имена файлов и папки:</p>
      <div class="split">
        <div class="treebox">
          <ul class="tree">
            <li class="sel"><svg class="s6"><use href="#i-plus"/></svg><svg class="s9"><use href="#i-folder"/></svg><span>Путь доступа к вспомогательным файлам</span></li>
            <li><svg class="s6"><use href="#i-plus"/></svg><svg class="s9"><use href="#i-folder"/></svg><span>Путь поиска рабочих вспомогательных файлов</span></li>
            <li><svg class="s6"><use href="#i-plus"/></svg><svg class="s9"><use href="#i-folder"/></svg><span>Доверенные местоположения</span></li>
            <li><svg class="s6"><use href="#i-plus"/></svg><svg class="s9"><use href="#i-folder"/></svg><span>Путь доступа к драйверам устройств</span></li>
            <li><svg class="s6"><use href="#i-plus"/></svg><svg class="s9"><use href="#i-proj"/></svg><span>Путь доступа к файлам проектов</span></li>
            <li><svg class="s6"><use href="#i-plus"/></svg><svg class="s9"><use href="#i-docs"/></svg><span>Файлы адаптации</span></li>
            <li><svg class="s6"><use href="#i-plus"/></svg><svg class="s9"><use href="#i-docs"/></svg><span>Имена файлов справки и других файлов</span></li>
            <li><svg class="s6"><use href="#i-plus"/></svg><svg class="s9"><use href="#i-docs"/></svg><span>Имена файлов текстового редактора, словаря и шрифтов</span></li>
            <li><svg class="s6"><use href="#i-plus"/></svg><svg class="s9"><use href="#i-docs"/></svg><span>Имена файла печати, программы фоновой печати и раздела пролога</span></li>
            <li><svg class="s6"><use href="#i-plus"/></svg><svg class="s9"><use href="#i-docs"/></svg><span>Путь к вспомогательным файлам печати</span></li>
            <li><svg class="s6"><use href="#i-plus"/></svg><svg class="s9"><use href="#i-folder2"/></svg><span>Папка для файла автосохранения</span></li>
            <li><svg class="s6"><use href="#i-plus"/></svg><svg class="s9"><use href="#i-folder"/></svg><span>Папки для альбомов цветов</span></li>
            <li><svg class="s6"><use href="#i-plus"/></svg><svg class="s9"><use href="#i-folder2"/></svg><span>Расположение изображений, импортируемых из PDF</span></li>
            <li><svg class="s6"><use href="#i-plus"/></svg><svg class="s9"><use href="#i-folder2"/></svg><span>Положение источников данных</span></li>
            <li><svg class="s6"><use href="#i-plus"/></svg><svg class="s9"><use href="#i-docs"/></svg><span>Параметры шаблонов</span></li>
            <li><svg class="s6"><use href="#i-plus"/></svg><svg class="s9"><use href="#i-folder2"/></svg><span>Расположение папки для синхронизации блоков</span></li>
            <li><svg class="s6"><use href="#i-plus"/></svg><svg class="s9"><use href="#i-folder"/></svg><span>Папки с файлами инструментальных палитр</span></li>
            <li><svg class="s6"><use href="#i-plus"/></svg><svg class="s9"><use href="#i-folder2"/></svg><span>Папки файлов палитры вариаций</span></li>
          </ul>
          <div class="scroll"><svg class="s6" viewBox="0 0 6 6"><path d="M1 4l2-2 2 2" fill="none" stroke="#444"/></svg><i class="thumb"></i><svg class="s6" viewBox="0 0 6 6"><path d="M1 2l2 2 2-2" fill="none" stroke="#444"/></svg></div>
        </div>
        <div class="side"><button>Обзор...</button><button>Добавить...</button><button disabled>Удалить</button><button disabled>Вверх</button><button disabled>Вниз</button><button disabled>Установить</button></div>
      </div>
    </div>
    <div class="actions"><button class="ok">ОК</button><button>Отмена</button><button>Применить</button><button>Справка</button></div>
  </section>

  <svg class="mark" viewBox="0 0 700 527" preserveAspectRatio="xMinYMin"><text x="145" y="402" transform="rotate(-31 145 402)">WWW.DIAKOV.NET</text></svg>
</div>
</body>
</html>
```
FILE: styles.css
```css
* { box-sizing: border-box; }
body { margin: 0; font-family: Lato, "Noto Sans", sans-serif; font-size: 7px; line-height: 8px; color: #d5d9df; background: #1f2733; }
button, input { font: inherit; color: inherit; background: none; border: 0; padding: 0; margin: 0; }
a { color: inherit; text-decoration: none; }
svg { display: block; flex: none; }
.defs { position: absolute; width: 0; height: 0; }
.s4 { width: 4px; height: 4px; }
.s5 { width: 5px; height: 5px; }
.s6 { width: 6px; height: 6px; }
.s7 { width: 7px; height: 7px; }
.s8 { width: 8px; height: 8px; }
.s9 { width: 9px; height: 9px; }
.s10 { width: 10px; height: 10px; }
.s13 { width: 13px; height: 13px; }
.s20 { width: 20px; height: 20px; }
.lit { color: #c3c8cf; }
.dim { color: #59616e; }
.right { transform: rotate(-90deg); }
.left { transform: rotate(90deg); }
.flip { transform: scaleX(-1); }
.ic { display: flex; align-items: center; justify-content: center; gap: 3px; }

.app { position: relative; display: flex; flex-direction: column; min-height: 100vh; border: 2px solid #17506a; border-top-width: 1px; border-right-width: 1px; border-bottom-width: 1px; background: #222a36; overflow: hidden; }

/* title bar */
.titlebar { display: flex; align-items: center; height: 16px; padding-left: 3px; padding-right: 4px; gap: 2px; }
.quick { display: flex; gap: 4px; padding-left: 7px; }
.history { display: flex; align-items: center; gap: 4px; }
.share { display: flex; align-items: center; gap: 2px; padding-left: 3px; color: #9cc8e0; white-space: nowrap; }
.doc { flex: 1; min-width: 0; padding-left: 9px; color: #e8eaed; white-space: nowrap; }
.search { flex: none; width: 101px; height: 11px; padding: 0 1px; background: #3d4657; font-style: italic; }
.search::placeholder { color: #8a919d; opacity: 1; }
.account { display: flex; align-items: center; gap: 4px; color: #e3e6ea; }
.login { display: flex; align-items: center; gap: 2px; white-space: nowrap; }
.help { border-left: 1px solid #4a5260; padding-left: 4px; }
.winbtns { display: flex; align-items: center; gap: 7px; padding-left: 38px; color: #fff; }
.min { width: 5px; height: 1px; background: #fff; margin-top: 4px; }
.max { width: 8px; height: 7px; border: 1px solid #c8ccd2; }

/* ribbon tabs */
.menu { display: flex; align-items: center; height: 13px; padding-left: 2px; color: #b6bcc6; white-space: nowrap; }
.menu a { padding: 2px 5px 3px; }
.menu .on { background: #3f4857; color: #e2e5e9; }
.menu .sheet { background: #10668f; color: #e6f3fa; }
.menu .ic { margin-left: 12px; }
.pill { width: 9px; height: 4px; background: #e4e6ea; }

/* ribbon */
.ribbon { display: grid; grid-template-columns: 149fr 76fr 78fr 155fr repeat(6, 35fr) 29fr; height: 56px; padding-left: 1px; padding-right: 1px; background: #2b3340; }
.panel { display: flex; flex-direction: column; justify-content: space-between; min-width: 0; background: #3b4453; border-right: 1px solid #2b3340; color: #6f7886; }
.plabel { display: flex; align-items: center; justify-content: center; gap: 4px; height: 12px; color: #d5d9df; font-weight: 600; }
.tools { display: flex; padding-top: 2px; }
.big { display: flex; flex-direction: column; align-items: center; min-width: 0; gap: 1px; color: #636c7b; white-space: nowrap; }
.big .s20 { margin-top: 2px; }
.bright .s20 { color: #a3a9b3; }
.mini { display: grid; align-items: center; justify-items: center; height: 42px; padding-top: 2px; color: #727b89; }
.draw { display: grid; grid-template-columns: 32fr 36fr 29fr 27fr 24fr; }
.two { grid-template-columns: 10px 8px; justify-content: start; column-gap: 1px; height: 41px; padding-top: 0; }
.five { grid-template-columns: 17px 17px 14px 6px 1fr; padding-left: 1px; }
.annot { display: grid; grid-template-columns: 28fr 27fr 23fr; }
.layers { gap: 3px; }
.layers .big { width: 31px; }
.layerbox { flex: 1; min-width: 0; }
.layersel { display: flex; align-items: center; justify-content: space-between; width: 100%; height: 12px; padding-right: 3px; background: #4a5363; }
.bulbs { width: 66px; height: 10px; }
.lay { grid-template-columns: repeat(5, 13px); height: 27px; gap: 1px; }
.fold { display: flex; flex-direction: column; align-items: center; min-width: 0; padding: 2px 0; margin: 1px 1px 1px 0; background: #4a5363; color: #6a7382; white-space: nowrap; }
.fold .s20 { color: #7e8692; }
.fold .s4 { margin-top: auto; color: #c3c8cf; }

/* file tabs */
.files { display: flex; align-items: flex-end; height: 16px; padding-left: 10px; border-bottom: 2px solid #3b4453; color: #b6bcc6; }
.ftab { display: flex; align-items: center; gap: 24px; height: 13px; padding: 0 4px 0 8px; background: #2d3542; border-radius: 4px 4px 0 0; white-space: nowrap; }
.start { width: 70px; }
.ftab.on { gap: 6px; padding-inline: 9px 6px; background: #3f4857; color: #eef0f3; font-weight: 600; }
.add { padding: 0 7px; height: 13px; font-size: 10px; line-height: 10px; color: #9aa1ac; }

/* drawing area */
.work { position: relative; flex: 1; margin: 0 2px 0 1px; background: #888; }
.drawing { position: absolute; inset: 0; width: 100%; height: 100%; }
.drawing text { font-family: "Liberation Sans", sans-serif; fill: #444; }
.drawing .t3 text { font-size: 3px; }
.drawing .t4, .drawing .t4 text { font-size: 4px; }
.drawing .t7 { font-size: 7px; }
.drawing .mid, .drawing .mid text { text-anchor: middle; }
.drawing .green text { fill: #2fc925; }
.drawing .cyan, .drawing .cyan text { fill: #2fdede; }
.drawing .mag, .drawing .mag text { fill: #d619d6; }
.drawing .blue text { fill: #1c17b5; }
.drawing .strong, .drawing .strong text { font-weight: 700; }
.docbtns { position: absolute; top: 6px; right: 8px; display: flex; align-items: center; gap: 5px; color: #fff; }
.dmin { width: 7px; height: 3px; background: #eee; border: 1px solid #555; }
.dmax { width: 6px; height: 6px; background: #666; border: 1px solid #eee; }
.navbar { position: absolute; top: 15px; right: 2px; width: 19px; height: 76px; background: #9c9c9c; border: 1px solid #6e6e6e; border-radius: 3px; }
.navbar svg { width: 17px; height: 74px; }
.cmd { position: absolute; left: 20%; bottom: 1px; width: 60%; height: 15px; display: flex; align-items: center; padding-right: 2px; border: 1px solid #9a9a9a; background: rgba(255, 255, 255, .7); color: #444; font-family: "Liberation Mono", monospace; }
.cmdgrip { display: flex; align-items: center; gap: 5px; align-self: stretch; width: 33px; padding: 0 2px; margin-right: 2px; background: #555c68; color: #fff; }
.dots { width: 3px; height: 11px; background: repeating-linear-gradient(#aaa 0 1px, #555c68 1px 2px); }
.cmd label { padding-left: 2px; }
.cmd input { flex: 1; min-width: 0; }

/* status bar */
.status { display: flex; align-items: center; height: 17px; margin-bottom: 1px; color: #aeb5bf; }
.ltab { height: 13px; padding: 2px 6px; margin-left: 7px; }
.ltab.on { padding-inline: 4px; margin-left: 2px; background: #3f4857; color: #fff; font-weight: 700; border-radius: 0 0 4px 4px; }
.sbtns { display: flex; align-items: center; gap: 1px; margin-left: auto; padding-right: 3px; color: #d5d9df; }
.sbtns .s4 { margin: 0 3px; }
.sbtns .act { background: #4b86c4; }
.mode { padding-right: 2px; font-style: italic; font-weight: 600; }

/* options dialog */
.dialog { position: absolute; left: 148px; top: 98px; width: 401px; display: flex; flex-direction: column; border: 1px solid #8b8f95; background: #f0f0f0; box-shadow: 0 2px 8px rgba(0, 0, 0, .4); color: #1d1d1d; font-family: "Noto Sans", "Liberation Sans", sans-serif; font-size: 6px; }
.dhead { display: flex; align-items: center; gap: 4px; height: 17px; padding: 0 5px; background: #fff; }
.dhead h1 { flex: 1; margin: 0; font: inherit; }
.profile { display: grid; grid-template-columns: 62px 149px 12px 64px 1fr; align-items: center; height: 13px; padding-left: 5px; }
.dtabs { display: flex; align-items: flex-end; height: 12px; padding-left: 6px; padding-right: 7px; white-space: nowrap; }
.dtabs button { flex: none; height: 11px; padding: 0 2px 1px 3px; border-right: 1px solid #d4d4d4; }
.dtabs .on { height: 12px; padding-inline: 6px 2px; background: #fff; }
.dtabs .last { margin-right: auto; padding-right: 0; border: 0; }
.dtabs .arr { display: flex; align-items: center; justify-content: center; width: 8px; padding: 0; border: 1px solid #ccc; }
.page { margin: 0 8px 0 6px; padding: 8px 12px 35px 6px; background: #fff; }
.cap { margin: 0 0 1px; }
.split { display: flex; align-items: flex-start; gap: 9px; }
.treebox { flex: 1; display: flex; height: 208px; border: 1px solid #8a8a8a; }
.tree { flex: 1; display: grid; grid-template-rows: repeat(18, 1fr); margin: 0; padding: 1px 0 1px 5px; list-style: none; white-space: nowrap; }
.tree li { display: flex; align-items: center; background: linear-gradient(#bbb, #bbb) 6px 50% / 6px 1px no-repeat, linear-gradient(#ccc, #ccc) 3px 0 / 1px 100% no-repeat; }
.tree .s9 { margin: 0 3px 0 6px; }
.tree span { padding: 1px; }
.sel span { background: #0a6fd0; color: #fff; outline: 1px dotted #7fa8cf; outline-offset: -1px; }
.scroll { display: flex; flex-direction: column; align-items: center; justify-content: space-between; width: 9px; padding: 2px 0; background: #f0f0f0; }
.thumb { width: 8px; height: 124px; margin-bottom: auto; margin-top: 2px; background: #cdcdcd; }
.side { display: flex; flex-direction: column; justify-content: space-between; width: 64px; height: 105px; margin-top: 1px; }
.side button { height: 12px; border: 1px solid #adadad; background: #e1e1e1; line-height: 9px; }
.side button:disabled { border-color: #bfbfbf; background: #ccc; color: #8b8b8b; }
.actions { display: flex; justify-content: flex-end; gap: 4px; padding: 6px 7px 4px; }
.actions button { width: 42px; height: 13px; border: 1px solid #b5b5b5; background: #e1e1e1; }
.actions .ok { border-color: #1f77c9; outline: 1px solid #1f77c9; outline-offset: -2px; }

/* diagonal mark over the window */
.mark { position: absolute; left: -2px; top: -1px; width: 700px; height: 527px; pointer-events: none; }
.mark text { font: 700 50px Inter, "Liberation Sans", sans-serif; fill: rgba(65, 65, 65, .52); }
```
